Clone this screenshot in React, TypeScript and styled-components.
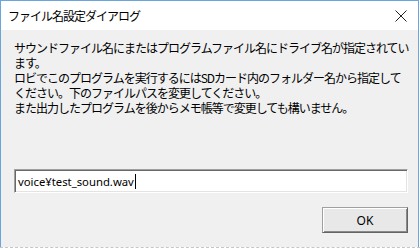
import React from 'react';
import styled, { createGlobalStyle } from 'styled-components';

const GlobalStyle = createGlobalStyle`
  html, body {
    margin: 0;
    padding: 0;
    background: #ffffff;
  }
  body {
    font-family: "Noto Sans CJK JP", "Noto Sans", sans-serif;
  }
`;

const Window = styled.div`
  width: 417px;
  height: 246px;
  border: 1px solid #6aa6dc;
  border-bottom: none;
  display: flex;
  flex-direction: column;
  background: #f0f0f0;
`;

const TitleBar = styled.div`
  height: 29px;
  flex-shrink: 0;
  background: #ffffff;
  display: flex;
  align-items: center;
  justify-content: space-between;
  padding: 0 11px 0 7px;
`;

const Title = styled.span`
  font-size: 12px;
  letter-spacing: -1px;
  color: #000;
`;

const CloseIcon = styled.svg`
  width: 12px;
  height: 12px;
  display: block;
`;

const Body = styled.div`
  flex: 1;
  display: flex;
  flex-direction: column;
  padding: 10px 10px 0 13px;
`;

const Message = styled.p`
  margin: 0;
  font-size: 12px;
  line-height: 15px;
  letter-spacing: -1px;
  color: #000;
  white-space: nowrap;
`;

const PathField = styled.div`
  margin-top: 54px;
  height: 24px;
  box-sizing: border-box;
  background: #ffffff;
  border: 1px solid;
  border-color: #a0a0a0 #ffffff #ffffff #a0a0a0;
  box-shadow: inset 1px 1px 0 #696969, inset -1px -1px 0 #e3e3e3;
  display: flex;
  align-items: center;
  padding-left: 3px;
  font-family: "Noto Sans", sans-serif;
  font-size: 11.3px;
  color: #000;
`;

const Caret = styled.span`
  display: inline-block;
  width: 0;
  height: 15px;
  border-left: 1px solid #000;
  margin-left: 1px;
`;

const ButtonRow = styled.div`
  margin-top: 14px;
  display: flex;
  justify-content: flex-end;
`;

const OkButton = styled.button`
  width: 86px;
  height: 26px;
  box-sizing: border-box;
  padding: 0;
  background: #e8e8e8;
  border: 1px solid;
  border-color: #a0a0a0 #646464 #646464 #a0a0a0;
  box-shadow: inset 1px 1px 0 #ffffff, inset -1px -1px 0 #8a8a8a;
  font-family: "Noto Sans", sans-serif;
  font-size: 12px;
  color: #000;
`;

const Desktop = styled.div`
  height: 2px;
  border-top: 1px dashed #c6c6c6;
  background: #ffffff;
`;

const App = () => {
  return (
    <>
      <GlobalStyle />
      <Window>
        <TitleBar>
          <Title>ファイル名設定ダイアログ</Title>
          <CloseIcon viewBox="0 0 12 12">
            <path d="M0.5 0.5 L11.5 11.5 M11.5 0.5 L0.5 11.5" stroke="#222" strokeWidth="1" fill="none" />
          </CloseIcon>
        </TitleBar>
        <Body>
          <Message>
            サウンドファイル名にまたはプログラムファイル名にドライブ名が指定されてい
            <br />
            ます。
            <br />
            ロビでこのプログラムを実行するにはSDカード内のフォルダー名から指定して
            <br />
            ください。下のファイルパスを変更してください。
            <br />
            また出力したプログラムを後からメモ帳等で変更しても構いません。
          </Message>
          <PathField>
            voice¥test_sound.wav
            <Caret />
          </PathField>
          <ButtonRow>
            <OkButton>OK</OkButton>
          </ButtonRow>
        </Body>
      </Window>
      <Desktop />
    </>
  );
};

export default App;
